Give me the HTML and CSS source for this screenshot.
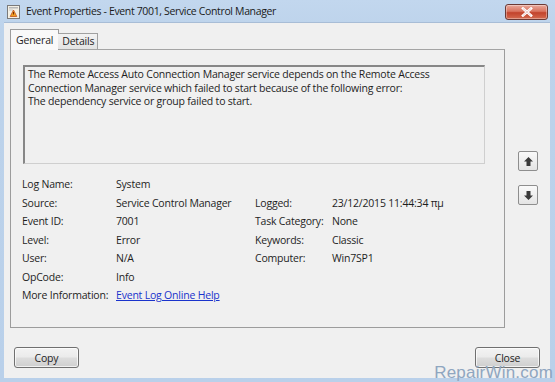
FILE: index.html
```html
<!DOCTYPE html>
<html>
<head>
<meta charset="utf-8">
<link rel="stylesheet" href="styles.css">
</head>
<body>
<div class="window">
  <div class="titlebar">
    <svg class="appicon" width="13" height="14" viewBox="0 0 13 14">
      <rect x="0.5" y="0.5" width="12" height="13" fill="#f4f0e4" stroke="#7a7a7a"/>
      <rect x="2" y="2" width="9" height="1.5" fill="#b8b8b8"/>
      <rect x="2" y="4.5" width="4" height="1" fill="#c8c8c8"/>
      <path d="M6.5 5 L9.8 11.5 L3.2 11.5 Z" fill="#f0a020" stroke="#c0501a" stroke-width="0.8"/>
      <rect x="6" y="7" width="1" height="2.5" fill="#7a2a00"/>
    </svg>
    <span class="title">Event Properties - Event 7001, Service Control Manager</span>
    <div class="closebtn">
      <svg width="14" height="10" viewBox="0 0 14 10">
        <path d="M3 1.5 L11 8.5 M11 1.5 L3 8.5" stroke="#fff" stroke-width="2.6" stroke-linecap="square"/>
        <path d="M3 1.5 L11 8.5 M11 1.5 L3 8.5" stroke="#a33" stroke-width="0.6" opacity="0.4"/>
      </svg>
    </div>
  </div>
  <div class="client">
    <div class="upper">
      <div class="tabarea">
        <div class="tabs">
          <div class="tab active">General</div>
          <div class="tab">Details</div>
        </div>
        <div class="panel">
          <div class="desc">The Remote Access Auto Connection Manager service depends on the Remote Access<br>Connection Manager service which failed to start because of the following error:<br>The dependency service or group failed to start.</div>
          <div class="props">
            <div class="l1">Log Name:</div><div class="v1">System</div><div></div><div></div>
            <div class="l1">Source:</div><div class="v1">Service Control Manager</div><div>Logged:</div><div>23/12/2015 11:44:34 πμ</div>
            <div class="l1">Event ID:</div><div class="v1">7001</div><div>Task Category:</div><div>None</div>
            <div class="l1">Level:</div><div class="v1">Error</div><div>Keywords:</div><div>Classic</div>
            <div class="l1">User:</div><div class="v1">N/A</div><div>Computer:</div><div>Win7SP1</div>
            <div class="l1">OpCode:</div><div class="v1">Info</div><div></div><div></div>
            <div class="l1">More Information:</div><div class="v1"><a href="#" class="link">Event Log Online Help</a></div><div></div><div></div>
          </div>
        </div>
      </div>
      <div class="arrows">
        <div class="arrowbtn">
          <svg width="11" height="11" viewBox="0 0 11 11"><path d="M5.5 1 L10 5.5 L7.5 5.5 L7.5 10 L3.5 10 L3.5 5.5 L1 5.5 Z" fill="#3a3a3a"/></svg>
        </div>
        <div class="arrowbtn">
          <svg width="11" height="11" viewBox="0 0 11 11"><path d="M5.5 10 L10 5.5 L7.5 5.5 L7.5 1 L3.5 1 L3.5 5.5 L1 5.5 Z" fill="#3a3a3a"/></svg>
        </div>
      </div>
    </div>
    <div class="buttons">
      <div class="btn">Copy</div>
      <div class="btn">Close</div>
    </div>
    <div class="watermark">RepairWin.com</div>
  </div>
</div>
</body>
</html>
```
FILE: styles.css
```css
html, body {
  margin: 0;
  padding: 0;
}
body {
  width: 555px;
  height: 382px;
  overflow: hidden;
  font-family: "Open Sans", "Noto Sans", sans-serif;
  font-size: 10.5px;
  letter-spacing: -0.2px;
  color: #1e1e1e;
  background: #bcd3ec;
}
.window {
  width: 555px;
  height: 382px;
  box-sizing: border-box;
  background: linear-gradient(#c2d7ee, #bdd3eb 30px, #b9d0ea);
  padding: 0 5px 4px 4px;
  display: flex;
  flex-direction: column;
}
.titlebar {
  height: 22px;
  display: flex;
  align-items: center;
  position: relative;
  flex: none;
}
.appicon {
  margin-left: 3px;
  margin-right: 6px;
  margin-top: 1px;
}
.title {
  font-size: 10.5px;
  color: #1a1a1a;
  letter-spacing: -0.35px;
}
.closebtn {
  position: absolute;
  right: 2px;
  top: 4px;
  width: 43px;
  height: 16px;
  border: 1px solid #6b3a35;
  border-radius: 3px;
  background: linear-gradient(#e9a99c, #d9745f 45%, #c2432c 55%, #d46a4f);
  display: flex;
  align-items: center;
  justify-content: center;
  box-sizing: border-box;
  box-shadow: inset 0 0 0 1px rgba(255,255,255,0.35);
}
.client {
  flex: 1;
  background: #f0f0f0;
  position: relative;
  display: flex;
  flex-direction: column;
  border-top: 1px solid #a8bdd6;
}
.upper {
  display: flex;
  padding: 6px 0 0 6px;
}
.tabarea {
  width: 495px;
}
.tabs {
  display: flex;
  align-items: flex-end;
  height: 20px;
  position: relative;
  z-index: 1;
}
.tab {
  border: 1px solid #a0a0a0;
  border-bottom: none;
  background: linear-gradient(#f2f2f2, #e3e3e3);
  padding: 0 3px;
  height: 16px;
  line-height: 15px;
  box-sizing: border-box;
}
.tab.active {
  background: #f9f9f9;
  height: 21px;
  padding: 2px 5px 0 5px;
  margin-bottom: -1px;
  border-color: #9c9c9c;
  line-height: 16px;
  border-right: 1px solid #9c9c9c;
}
.tab + .tab {
  margin-left: -1px;
  border-left: none;
  padding-left: 4px;
}
.panel {
  border: 1px solid #9c9c9c;
  border-top-color: #a4a4a4;
  height: 279px;
  box-sizing: border-box;
  background: #f0f0f0;
  padding: 15px 19px 0 12px;
}
.desc {
  height: 99px;
  box-sizing: border-box;
  border: 1px solid #cfcfcf;
  border-top: 2px solid #878787;
  border-left: 2px solid #878787;
  background: #f0f0f0;
  padding: 1px 3px;
  line-height: 13.5px;
  white-space: nowrap;
}
.props {
  display: grid;
  grid-template-columns: 94px 139px 77px auto;
  grid-auto-rows: 18.5px;
  margin-top: 11px;
  margin-left: -1px;
  align-items: center;
}
.link {
  color: #1a33cc;
  text-decoration: underline;
}
.arrows {
  display: flex;
  flex-direction: column;
  gap: 14px;
  margin-left: 13px;
  margin-top: 122px;
}
.arrowbtn {
  width: 20px;
  height: 20px;
  box-sizing: border-box;
  border: 1px solid #8e8e8e;
  border-radius: 2px;
  background: linear-gradient(#fafafa, #e4e4e4);
  display: flex;
  align-items: center;
  justify-content: center;
}
.buttons {
  display: flex;
  justify-content: space-between;
  padding: 0 10px 0 10px;
  margin-top: 19px;
}
.btn {
  width: 65px;
  height: 21px;
  box-sizing: border-box;
  border: 1px solid #707070;
  border-radius: 3px;
  background: linear-gradient(#f3f3f3, #ebebeb 48%, #dddddd 52%, #cfcfcf);
  display: flex;
  align-items: center;
  justify-content: center;
  box-shadow: inset 0 0 0 1px rgba(255,255,255,0.7);
}
.watermark {
  position: absolute;
  right: -3px;
  bottom: -5px;
  font-family: "Liberation Sans", sans-serif;
  font-size: 17px;
  color: #8fa6c0;
  letter-spacing: 0.2px;
}
```
